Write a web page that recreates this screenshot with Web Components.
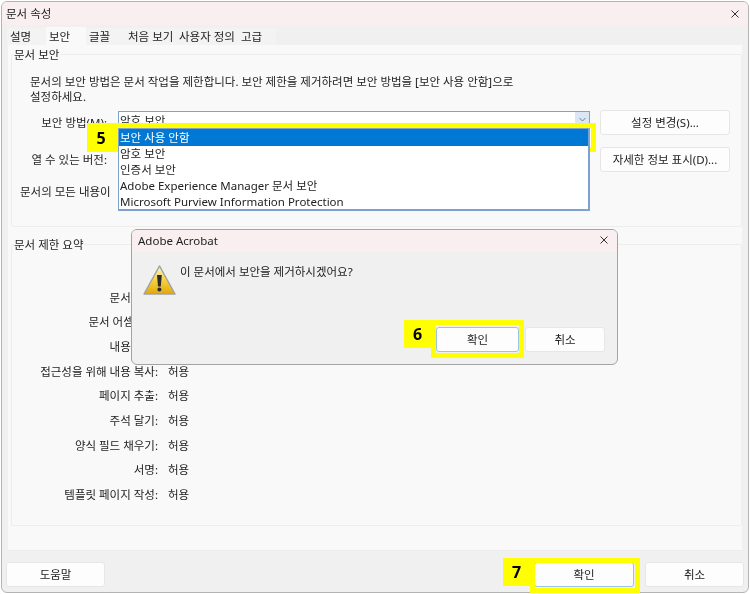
<!DOCTYPE html>
<html lang="ko">
<head>
<meta charset="utf-8">
<title>문서 속성</title>
<style>
  html, body { margin: 0; height: 594px; overflow: hidden; background: #fff; }
  body {
    position: relative;
    font: 11.5px/15px "Noto Sans", "Noto Sans CJK KR", sans-serif;
    color: #222;
    filter: blur(.35px);
  }
  prop-window { margin: 1px 0 0 1px; }
  alert-dialog { position: absolute; left: 131px; top: 229px; width: 487px; height: 136px; }
  callout-mark { position: absolute; }
</style>
</head>
<body>
  <prop-window>
    <win-title slot="title">문서 속성</win-title>
    <tab-strip slot="tabs"></tab-strip>

    <group-box legend="문서 보안" style="height: 180px">
      <security-form></security-form>
    </group-box>
    <group-box legend="문서 제한 요약" style="height: 289px; margin-top: 10px">
      <perm-list></perm-list>
    </group-box>

    <win-button slot="footer" style="left: 4px; width: 99px">도움말</win-button>
    <win-button slot="footer" style="left: 532px; width: 100px" primary>확인</win-button>
    <win-button slot="footer" style="left: 643px; width: 99px">취소</win-button>
  </prop-window>

  <alert-dialog></alert-dialog>

  <callout-mark num="5" style="left: 87px; top: 123px; width: 509px; height: 29px" tab="28" tabh="29" stroke="5"></callout-mark>
  <callout-mark num="6" style="left: 404px; top: 320px; width: 120px; height: 38px" tab="27" tabh="28" stroke="5"></callout-mark>
  <callout-mark num="7" style="left: 503px; top: 558px; width: 137px; height: 35px" tab="27" tabh="28" stroke="5"></callout-mark>

<script>
class PropWindow extends HTMLElement {
  connectedCallback () {
    this.attachShadow({ mode: 'open' })
    this.shadowRoot.innerHTML = `
      <style>
        :host {
          display: flex;
          flex-direction: column;
          box-sizing: border-box;
          width: 748px;
          height: 592px;
          border: 1px solid #b4b4b4;
          border-radius: 6px;
          overflow: hidden;
          background: #f0f0f0;
        }
        .panel {
          box-sizing: border-box;
          height: 506px;
          margin: 0 6px;
          padding: 2px 0 0 3px;
          background: #f9f9f9;
          border-bottom: 1px solid #ececec;
        }
        .footer { position: relative; flex: 1; }
      </style>
      <slot name="title"></slot>
      <slot name="tabs"></slot>
      <div class="panel"><slot></slot></div>
      <div class="footer"><slot name="footer"></slot></div>
    `
  }
}

class WinTitle extends HTMLElement {
  connectedCallback () {
    this.attachShadow({ mode: 'open' })
    this.shadowRoot.innerHTML = `
      <style>
        :host {
          display: flex;
          align-items: center;
          justify-content: space-between;
          flex: none;
          height: 23px;
          padding: 0 8px 0 4px;
          background: #f9eff1;
        }
        svg { display: block; }
      </style>
      <slot></slot>
      <svg width="10" height="10" viewBox="0 0 10 10" fill="none" stroke="#333" stroke-width="1">
        <path d="M1.5 1.5l7 7M8.5 1.5l-7 7"/>
      </svg>
    `
  }
}

class TabStrip extends HTMLElement {
  connectedCallback () {
    const tabs = [['설명', 39], ['보안', 40], ['글꼴', 39], ['처음 보기', 51], ['사용자 정의', 62], ['고급', 38]]
    this.attachShadow({ mode: 'open' })
    this.shadowRoot.innerHTML = `
      <style>
        :host {
          display: flex;
          flex: none;
          height: 20px;
          padding-left: 5px;
        }
        div {
          display: flex;
          align-items: center;
          box-sizing: border-box;
          padding-left: 3px;
          margin-top: 3px;
          background: #f3f3f3;
          white-space: nowrap;
        }
        .active { margin-top: 2px; background: #f9f9f9; }
      </style>
      ${tabs.map(([name, width]) => `<div class="${name === '보안' ? 'active' : ''}" style="width:${width}px">${name}</div>`).join('')}
    `
  }
}

class GroupBox extends HTMLElement {
  connectedCallback () {
    this.attachShadow({ mode: 'open' })
    this.shadowRoot.innerHTML = `
      <style>
        :host { display: block; width: 731px; box-sizing: border-box; }
        fieldset {
          box-sizing: border-box;
          height: 100%;
          margin: 0;
          padding: 0;
          border: 1px solid #ededed;
          border-radius: 2px;
        }
        legend { margin-left: 1px; padding: 0 1px; }
      </style>
      <fieldset>
        <legend>${this.getAttribute('legend')}</legend>
        <slot></slot>
      </fieldset>
    `
  }
}

class SecurityForm extends HTMLElement {
  connectedCallback () {
    this.attachShadow({ mode: 'open' })
    this.shadowRoot.innerHTML = `
      <style>
        :host { display: block; padding: 12px 0 0 18px; }
        p { margin: 0 0 6px; white-space: nowrap; }
        .row {
          display: grid;
          grid-template-columns: 78px 472px 130px;
          column-gap: 10px;
          align-items: center;
          height: 25px;
          margin-bottom: 12px;
        }
        .row label { padding-right: 1px; text-align: right; white-space: nowrap; }
        .all { margin: 0 0 0 -10px; white-space: nowrap; }
      </style>
      <p>문서의 보안 방법은 문서 작업을 제한합니다. 보안 제한을 제거하려면 보안 방법을 [보안 사용 안함]으로<br>설정하세요.</p>
      <div class="row">
        <label>보안 방법(M):</label>
        <combo-list></combo-list>
        <win-button>설정 변경(S)...</win-button>
      </div>
      <div class="row">
        <label>열 수 있는 버전:</label>
        <span></span>
        <win-button>자세한 정보 표시(D)...</win-button>
      </div>
      <div class="all">문서의 모든 내용이</div>
    `
  }
}

class ComboList extends HTMLElement {
  connectedCallback () {
    const items = ['암호 보안', '인증서 보안', 'Adobe Experience Manager 문서 보안', 'Microsoft Purview Information Protection']
    this.attachShadow({ mode: 'open' })
    this.shadowRoot.innerHTML = `
      <style>
        :host {
          display: block;
          position: relative;
          box-sizing: border-box;
          height: 18px;
          margin-top: -6px;
          padding-left: 1px;
          line-height: 17px;
          background: #fff;
          border: 1px solid #7da2ce;
          white-space: nowrap;
        }
        .arrow {
          position: absolute;
          right: 0;
          top: 0;
          width: 14px;
          height: 16px;
          background: #dbe7f4;
        }
        .arrow svg { display: block; margin: 5px 0 0 4px; }
        ul {
          position: absolute;
          z-index: 1;
          left: -1px;
          right: -1px;
          top: 16px;
          margin: 0;
          padding: 0;
          list-style: none;
          background: #fff;
          border: 1px solid #7da2ce;
          border-width: 1px 2px 2px 1px;
          height: 80px;
        }
        li { height: 16px; line-height: 16px; padding-left: 1px; }
        li.on { height: 17.5px; line-height: 17.5px; background: #0078d4; color: #fff; }
      </style>
      암호 보안
      <div class="arrow">
        <svg width="7" height="5" viewBox="0 0 7 5" fill="none" stroke="#6a7a8c"><path d="M.5 1l3 3 3-3"/></svg>
      </div>
      <ul>
        <li class="on">보안 사용 안함</li>
        ${items.map(item => `<li>${item}</li>`).join('')}
      </ul>
    `
  }
}

class PermList extends HTMLElement {
  connectedCallback () {
    const rows = [
      ['문서 변경:', ''],
      ['문서 어셈블리:', ''],
      ['내용 복사:', ''],
      ['접근성을 위해 내용 복사:', '허용'],
      ['페이지 추출:', '허용'],
      ['주석 달기:', '허용'],
      ['양식 필드 채우기:', '허용'],
      ['서명:', '허용'],
      ['템플릿 페이지 작성:', '허용']
    ]
    this.attachShadow({ mode: 'open' })
    this.shadowRoot.innerHTML = `
      <style>
        :host {
          display: grid;
          grid-template-columns: 146px 1fr;
          grid-auto-rows: 24.65px;
          column-gap: 10px;
          padding-top: 33px;
          align-items: center;
        }
        .label { text-align: right; white-space: nowrap; }
      </style>
      ${rows.map(([label, value]) => `<span class="label">${label}</span><span>${value}</span>`).join('')}
    `
  }
}

class WinButton extends HTMLElement {
  connectedCallback () {
    this.attachShadow({ mode: 'open' })
    this.shadowRoot.innerHTML = `
      <style>
        :host {
          display: flex;
          align-items: center;
          justify-content: center;
          box-sizing: border-box;
          height: 25px;
          background: #fdfdfd;
          border: 1px solid #e6e6e6;
          border-radius: 3px;
          white-space: nowrap;
        }
        :host([slot="footer"]) { position: absolute; top: 11px; }
        :host([primary]) { border: 1.5px solid #9cc3e4; background: #fdfdfd; }
      </style>
      <slot></slot>
    `
  }
}

class AlertDialog extends HTMLElement {
  connectedCallback () {
    this.attachShadow({ mode: 'open' })
    this.shadowRoot.innerHTML = `
      <style>
        :host {
          display: flex;
          flex-direction: column;
          box-sizing: border-box;
          background: #f0f0f0;
          border: 1px solid #a3a3a3;
          border-radius: 6px;
          overflow: hidden;
        }
        .title {
          display: flex;
          align-items: center;
          justify-content: space-between;
          box-sizing: border-box;
          flex: none;
          height: 22px;
          padding: 0 8px 2px 6px;
          background: #f9eff1;
        }
        .title svg { display: block; }
        .body {
          display: flex;
          gap: 4px;
          flex: 1;
          padding: 12px 0 0 11px;
        }
        .icon { display: block; }
        .buttons {
          display: flex;
          justify-content: flex-end;
          gap: 6px;
          flex: none;
          padding: 0 12px 12px 0;
        }
      </style>
      <div class="title">
        <span>Adobe Acrobat</span>
        <svg width="10" height="10" viewBox="0 0 10 10" fill="none" stroke="#333"><path d="M1.5 1.5l7 7M8.5 1.5l-7 7"/></svg>
      </div>
      <div class="body">
        <svg class="icon" width="33" height="32" viewBox="0 0 33 32">
          <defs>
            <linearGradient id="warn" x1="0" y1="0" x2="0" y2="1">
              <stop offset="0" stop-color="#fdf6d2"/>
              <stop offset=".5" stop-color="#f6d23e"/>
              <stop offset="1" stop-color="#e2a80c"/>
            </linearGradient>
          </defs>
          <path d="M16.5 2 L32 30 H1 Z" fill="url(#warn)" stroke="#a2a2a2" stroke-width="1.5" stroke-linejoin="round"/>
          <path d="M14 11 h4.8 l-1 11.5 h-2.8 Z" fill="#2b2b2b"/>
          <circle cx="16.4" cy="25.5" r="2" fill="#2b2b2b"/>
        </svg>
        <div>이 문서에서 보안을 제거하시겠어요?</div>
      </div>
      <div class="buttons">
        <win-button style="width: 83px" primary>확인</win-button>
        <win-button style="width: 80px">취소</win-button>
      </div>
    `
  }
}

class CalloutMark extends HTMLElement {
  connectedCallback () {
    const tab = this.getAttribute('tab')
    const tabh = this.getAttribute('tabh')
    const stroke = this.getAttribute('stroke')
    this.attachShadow({ mode: 'open' })
    this.shadowRoot.innerHTML = `
      <style>
        :host { display: block; pointer-events: none; }
        .num {
          position: absolute;
          left: 0;
          top: 0;
          display: flex;
          align-items: center;
          justify-content: center;
          width: ${tab}px;
          height: ${tabh}px;
          background: #ffff00;
          color: #000;
          font: 700 16px "Noto Sans", sans-serif;
        }
        .box {
          position: absolute;
          left: ${tab}px;
          right: 0;
          top: 0;
          bottom: 0;
          border: ${stroke}px solid #ffff00;
        }
      </style>
      <div class="num">${this.getAttribute('num')}</div>
      <div class="box"></div>
    `
  }
}

customElements.define('prop-window', PropWindow)
customElements.define('win-title', WinTitle)
customElements.define('tab-strip', TabStrip)
customElements.define('group-box', GroupBox)
customElements.define('security-form', SecurityForm)
customElements.define('combo-list', ComboList)
customElements.define('perm-list', PermList)
customElements.define('win-button', WinButton)
customElements.define('alert-dialog', AlertDialog)
customElements.define('callout-mark', CalloutMark)
</script>
</body>
</html>
